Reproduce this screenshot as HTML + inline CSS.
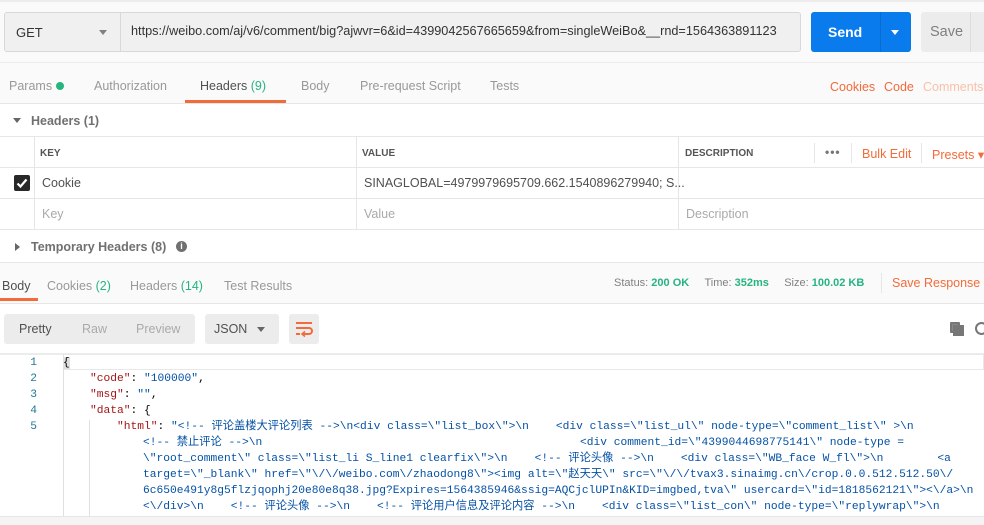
<!DOCTYPE html><html><head><meta charset="utf-8"><style>
*{box-sizing:border-box;margin:0;padding:0}
body{width:984px;height:525px;overflow:hidden;background:#fff;font-family:"Liberation Sans","Noto Sans CJK SC",sans-serif;font-size:12px;color:#505050;position:relative}
.a{position:absolute;white-space:nowrap}
.g{color:#26b47f}.o{color:#f26b3a}
.code{font-family:"Liberation Mono","Noto Sans CJK SC",monospace;font-size:11.25px;line-height:16px}
.k{color:#a31515}.s{color:#0451a5}
</style></head><body>
<div class="a" style="left:0;top:0;width:984px;height:62px;background:#fafafa;border-top:2px solid #ececec"></div>
<div class="a" style="left:4px;top:12px;width:117px;height:40px;background:#f0f0f0;border:1px solid #d8d8d8;border-radius:3px 0 0 3px"></div>
<div class="a" style="left:16px;top:25px;font-size:13px;color:#333">GET</div>
<div class="a" style="left:99px;top:30px;width:0;height:0;border-left:4px solid transparent;border-right:4px solid transparent;border-top:5px solid #808080"></div>
<div class="a" style="left:120px;top:12px;width:681px;height:40px;background:#f0f0f0;border:1px solid #d8d8d8;border-radius:0 3px 3px 0"></div>
<div class="a" style="left:131px;top:24px;font-size:12.7px;color:#333">https://weibo.com/aj/v6/comment/big?ajwvr=6&amp;id=4399042567665659&amp;from=singleWeiBo&amp;__rnd=1564363891123</div>
<div class="a" style="left:811px;top:12px;width:100px;height:40px;background:#097bed;border-radius:3px"></div>
<div class="a" style="left:880px;top:12px;width:1px;height:40px;background:#0a6cd0"></div>
<div class="a" style="left:828px;top:24px;font-size:14px;font-weight:bold;color:#fff">Send</div>
<div class="a" style="left:891px;top:30px;border-left:4px solid transparent;border-right:4px solid transparent;border-top:5px solid #fff"></div>
<div class="a" style="left:921px;top:12px;width:70px;height:40px;background:#ececec;border-radius:3px"></div>
<div class="a" style="left:930px;top:24px;font-size:14.5px;color:#808080">Save</div>
<div class="a" style="left:970px;top:12px;width:1px;height:40px;background:#ddd"></div>

<div class="a" style="left:0;top:62px;width:984px;height:42px;background:#fafafa;border-top:1px solid #ececec;border-bottom:1px solid #e6e6e6"></div>
<div class="a" style="left:9px;top:79px;font-size:12.5px;color:#999">Params <span style="display:inline-block;width:8px;height:8px;border-radius:50%;background:#26b47f"></span></div>
<div class="a" style="left:94px;top:79px;font-size:12.5px;color:#999">Authorization</div>
<div class="a" style="left:200px;top:79px;font-size:12.5px;color:#505050">Headers <span class="g">(9)</span></div>
<div class="a" style="left:185px;top:100px;width:101px;height:3px;background:#f26b3a"></div>
<div class="a" style="left:301px;top:79px;font-size:12.5px;color:#999">Body</div>
<div class="a" style="left:360px;top:79px;font-size:12.5px;color:#999">Pre-request Script</div>
<div class="a" style="left:490px;top:79px;font-size:12.5px;color:#999">Tests</div>
<div class="a" style="left:830px;top:80px;font-size:12.5px;color:#f26b3a">Cookies</div>
<div class="a" style="left:884px;top:80px;font-size:12.5px;color:#f26b3a">Code</div>
<div class="a" style="left:923px;top:80px;font-size:12.5px;color:#f9c0a8">Comments</div>

<div class="a" style="left:13px;top:118px;border-left:4px solid transparent;border-right:4px solid transparent;border-top:5px solid #666"></div>
<div class="a" style="left:31px;top:114px;font-size:12.5px;color:#707070;font-weight:bold">Headers (1)</div>
<div class="a" style="left:0;top:136px;width:984px;height:94px;border-top:1px solid #e6e6e6;border-bottom:1px solid #e6e6e6"></div>
<div class="a" style="left:0;top:167px;width:984px;height:1px;background:#e6e6e6"></div>
<div class="a" style="left:0;top:198px;width:984px;height:1px;background:#e6e6e6"></div>
<div class="a" style="left:34px;top:136px;width:1px;height:94px;background:#e6e6e6"></div>
<div class="a" style="left:356px;top:136px;width:1px;height:94px;background:#e6e6e6"></div>
<div class="a" style="left:678px;top:136px;width:1px;height:94px;background:#e6e6e6"></div>
<div class="a" style="left:814px;top:143px;width:1px;height:20px;background:#e6e6e6"></div>
<div class="a" style="left:851px;top:143px;width:1px;height:20px;background:#e6e6e6"></div>
<div class="a" style="left:921px;top:143px;width:1px;height:20px;background:#e6e6e6"></div>
<div class="a" style="left:40px;top:148px;font-size:10px;font-weight:bold;color:#555">KEY</div>
<div class="a" style="left:362px;top:148px;font-size:10px;font-weight:bold;color:#555">VALUE</div>
<div class="a" style="left:685px;top:148px;font-size:10px;font-weight:bold;color:#555">DESCRIPTION</div>
<div class="a" style="left:825px;top:145px;font-size:12px;font-weight:bold;color:#777;letter-spacing:1px">•••</div>
<div class="a" style="left:862px;top:147px;font-size:12.5px;color:#f26b3a">Bulk Edit</div>
<div class="a" style="left:932px;top:147px;font-size:12.5px;color:#f26b3a">Presets ▾</div>
<div class="a" style="left:14px;top:175px;width:16px;height:16px;background:#282828;border-radius:2px"><svg width="16" height="16"><path d="M3.5 8.5l3 3 6-7" stroke="#fff" stroke-width="2.2" fill="none"/></svg></div>
<div class="a" style="left:42px;top:176px;font-size:12.5px;color:#505050">Cookie</div>
<div class="a" style="left:364px;top:176px;font-size:12.5px;color:#505050">SINAGLOBAL=4979979695709.662.1540896279940; S...</div>
<div class="a" style="left:42px;top:207px;font-size:12.5px;color:#aaa">Key</div>
<div class="a" style="left:364px;top:207px;font-size:12.5px;color:#aaa">Value</div>
<div class="a" style="left:686px;top:207px;font-size:12.5px;color:#aaa">Description</div>
<div class="a" style="left:15px;top:243px;border-top:4px solid transparent;border-bottom:4px solid transparent;border-left:5px solid #666"></div>
<div class="a" style="left:31px;top:240px;font-size:12.5px;color:#707070;font-weight:bold">Temporary Headers (8)</div>
<div class="a" style="left:176px;top:241px;width:11px;height:11px;border-radius:50%;background:#707070;color:#fff;font-size:9px;font-weight:bold;text-align:center;line-height:11px">i</div>

<div class="a" style="left:0;top:262px;width:984px;height:42px;background:#fafafa;border-top:1px solid #e6e6e6;border-bottom:1px solid #e6e6e6"></div>
<div class="a" style="left:2px;top:279px;font-size:12.5px;color:#505050">Body</div>
<div class="a" style="left:0;top:298px;width:38px;height:3px;background:#f26b3a"></div>
<div class="a" style="left:47px;top:279px;font-size:12.5px;color:#999">Cookies <span class="g">(2)</span></div>
<div class="a" style="left:130px;top:279px;font-size:12.5px;color:#999">Headers <span class="g">(14)</span></div>
<div class="a" style="left:224px;top:279px;font-size:12.5px;color:#999">Test Results</div>
<div class="a" style="left:614px;top:277px;font-size:11px;color:#808080">Status: <span class="g" style="font-weight:bold">200 OK</span>&nbsp;&nbsp;&nbsp;&nbsp;&nbsp;Time: <span class="g" style="font-weight:bold">352ms</span>&nbsp;&nbsp;&nbsp;&nbsp;&nbsp;Size: <span class="g" style="font-weight:bold">100.02 KB</span></div>
<div class="a" style="left:881px;top:273px;width:1px;height:20px;background:#e6e6e6"></div>
<div class="a" style="left:892px;top:276px;font-size:12.5px;color:#f26b3a">Save Response</div>

<div class="a" style="left:4px;top:314px;width:191px;height:30px;background:#ececec;border-radius:3px"></div>
<div class="a" style="left:19px;top:322px;font-size:12.5px;color:#505050">Pretty</div>
<div class="a" style="left:82px;top:322px;font-size:12.5px;color:#aaa">Raw</div>
<div class="a" style="left:136px;top:322px;font-size:12.5px;color:#aaa">Preview</div>
<div class="a" style="left:205px;top:314px;width:74px;height:30px;background:#ececec;border-radius:3px"></div>
<div class="a" style="left:214px;top:322px;font-size:12.5px;color:#505050">JSON</div>
<div class="a" style="left:257px;top:327px;border-left:4px solid transparent;border-right:4px solid transparent;border-top:5px solid #666"></div>
<div class="a" style="left:289px;top:314px;width:30px;height:30px;background:#ececec;border-radius:3px"><svg width="30" height="30"><path d="M7 9h16M7 14h13a3 3 0 0 1 0 6h-6M7 20h4" stroke="#f26b3a" stroke-width="2" fill="none"/><path d="M16 17.5l-3 2.5 3 2.5" stroke="#f26b3a" stroke-width="1.6" fill="none"/></svg></div>
<div class="a" style="left:950px;top:322px;width:10px;height:11px;border:2px solid #777;border-radius:1px;background:#888"></div>
<div class="a" style="left:953px;top:325px;width:11px;height:11px;background:#777"></div>
<div class="a" style="left:975px;top:322px;width:13px;height:13px;border:2px solid #777;border-radius:50%"></div>

<div class="a" style="left:0;top:353px;width:984px;height:2px;background:#ececec"></div>
<div class="a" style="left:0;top:516px;width:984px;height:9px;background:#f4f4f4;border-top:1px solid #e6e6e6"></div>
<div class="a" style="left:63px;top:354px;width:921px;height:16px;border:1px solid #e8e8e8;border-left:none"></div>
<div class="a" style="left:63px;top:355px;width:1px;height:161px;background:#e0e0e0"></div>
<div class="a" style="left:89px;top:420px;width:1px;height:96px;background:#e0e0e0"></div>
<div class="a code" style="left:0;top:355px;width:37px;text-align:right;color:#237893">1<br>2<br>3<br>4<br>5</div>
<div class="a code" style="left:63px;top:355px;color:#000"><span style="background:#e0e0e0">{</span><br>
&nbsp;&nbsp;&nbsp;&nbsp;<span class="k">"code"</span>: <span class="s">"100000"</span>,<br>
&nbsp;&nbsp;&nbsp;&nbsp;<span class="k">"msg"</span>: <span class="s">""</span>,<br>
&nbsp;&nbsp;&nbsp;&nbsp;<span class="k">"data"</span>: {<br>
&nbsp;&nbsp;&nbsp;&nbsp;&nbsp;&nbsp;&nbsp;&nbsp;<span class="k">"html"</span>: <span class="s">"&lt;!-- 评论盖楼大评论列表 --&gt;\n&lt;div class=\"list_box\"&gt;\n&nbsp;&nbsp;&nbsp;&nbsp;&lt;div class=\"list_ul\" node-type=\"comment_list\" &gt;\n</span></div>
<div class="a code s" style="left:143px;top:435px">&lt;!-- 禁止评论 --&gt;\n<br>
\"root_comment\" class=\"list_li S_line1 clearfix\"&gt;\n&nbsp;&nbsp;&nbsp;&nbsp;&lt;!-- 评论头像 --&gt;\n&nbsp;&nbsp;&nbsp;&nbsp;&lt;div class=\"WB_face W_fl\"&gt;\n&nbsp;&nbsp;&nbsp;&nbsp;&nbsp;&nbsp;&nbsp;&nbsp;&lt;a<br>
target=\"_blank\" href=\"\/\/weibo.com\/zhaodong8\"&gt;&lt;img alt=\"赵天天\" src=\"\/\/tvax3.sinaimg.cn\/crop.0.0.512.512.50\/<br>
6c650e491y8g5flzjqophj20e80e8q38.jpg?Expires=1564385946&amp;ssig=AQCjclUPIn&amp;KID=imgbed,tva\" usercard=\"id=1818562121\"&gt;&lt;\/a&gt;\n<br>
&lt;\/div&gt;\n&nbsp;&nbsp;&nbsp;&nbsp;&lt;!-- 评论头像 --&gt;\n&nbsp;&nbsp;&nbsp;&nbsp;&lt;!-- 评论用户信息及评论内容 --&gt;\n&nbsp;&nbsp;&nbsp;&nbsp;&lt;div class=\"list_con\" node-type=\"replywrap\"&gt;\n</div>
<div class="a code s" style="left:580px;top:435px">&lt;div comment_id=\"4399044698775141\" node-type =</div>
</body></html>
